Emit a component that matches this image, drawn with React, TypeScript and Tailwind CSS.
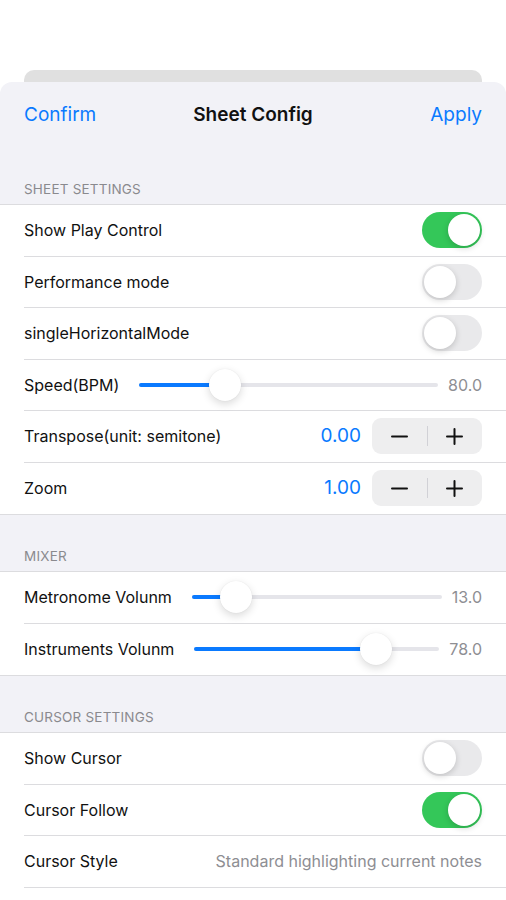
import React from 'react';

const font = { fontFamily: 'Inter, "Noto Sans", sans-serif' };

function Toggle({ on }: { on: boolean }) {
  return (
    <div
      className={`w-[60px] h-[36px] rounded-full p-[2px] flex ${
        on ? 'bg-[#34c759] justify-end' : 'bg-[#e9e9eb] justify-start'
      }`}
    >
      <div className="w-[32px] h-[32px] rounded-full bg-white shadow-[0_2px_6px_rgba(0,0,0,0.18)]" />
    </div>
  );
}

function Slider({ value, fraction }: { value: string; fraction: number }) {
  const left = `calc(${fraction} * (100% - 32px))`;
  const fill = `calc(${fraction} * (100% - 32px) + 16px)`;
  return (
    <>
      <div className="flex-1 relative h-[32px] flex items-center ml-5 mr-[10px]">
        <div className="w-full h-[4px] rounded-full bg-[#e5e5ea]" />
        <div className="absolute left-0 h-[4px] rounded-full bg-[#0a7aff]" style={{ width: fill }} />
        <div
          className="absolute top-0 w-[32px] h-[32px] rounded-full bg-white shadow-[0_3px_8px_rgba(0,0,0,0.15),0_0_1px_rgba(0,0,0,0.1)]"
          style={{ left }}
        />
      </div>
      <span className="text-[16px] text-[#8e8e93]">{value}</span>
    </>
  );
}

function Stepper({ value }: { value: string }) {
  return (
    <div className="flex items-center gap-[11px]">
      <span className="text-[19px] text-[#0a7aff]">{value}</span>
      <div className="w-[110px] h-[36px] rounded-[9px] bg-[#eeeeef] flex items-center">
        <div className="flex-1 flex justify-center">
          <svg width="17" height="17" viewBox="0 0 17 17">
            <path d="M1 8.5h15" stroke="#111" strokeWidth="2" strokeLinecap="round" />
          </svg>
        </div>
        <div className="w-px h-[20px] bg-[#d1d1d6]" />
        <div className="flex-1 flex justify-center">
          <svg width="17" height="17" viewBox="0 0 17 17">
            <path d="M1 8.5h15M8.5 1v15" stroke="#111" strokeWidth="2" strokeLinecap="round" />
          </svg>
        </div>
      </div>
    </div>
  );
}

function Row({ label, children, last }: { label: string; children?: React.ReactNode; last?: boolean }) {
  return (
    <div className="pl-6 bg-white">
      <div
        className={`h-[51.5px] pr-6 flex items-center ${last ? '' : 'border-b border-[#dcdcdf]'}`}
      >
        <span className="text-[16px] text-[#111] whitespace-nowrap">{label}</span>
        {children}
      </div>
    </div>
  );
}

function Header({ title }: { title: string }) {
  return (
    <div className="h-[57px] flex items-end px-6 pb-[5px] border-b border-[#dcdcdf]">
      <span className="text-[13.5px] uppercase text-[#8a8a8e] tracking-[0.2px]">{title}</span>
    </div>
  );
}

export default function App() {
  return (
    <div className="w-[506px] h-[900px] bg-white overflow-hidden flex flex-col" style={font}>
      <div className="h-[70px] shrink-0" />
      <div className="mx-6 h-[12px] shrink-0 rounded-t-[10px] bg-[#e0e0e0]" />
      <div className="flex-1 rounded-t-[12px] bg-[#f2f2f7] flex flex-col">
        <div className="h-[66px] shrink-0 px-6 grid grid-cols-3 items-center">
          <span className="text-[19px] text-[#0a7aff]">Confirm</span>
          <span className="text-[19px] font-semibold text-[#111] text-center whitespace-nowrap">Sheet Config</span>
          <span className="text-[19px] text-[#0a7aff] text-right">Apply</span>
        </div>

        <Header title="Sheet Settings" />
        <div className="border-b border-[#dcdcdf]">
          <Row label="Show Play Control">
            <div className="ml-auto"><Toggle on /></div>
          </Row>
          <Row label="Performance mode">
            <div className="ml-auto"><Toggle on={false} /></div>
          </Row>
          <Row label="singleHorizontalMode">
            <div className="ml-auto"><Toggle on={false} /></div>
          </Row>
          <Row label="Speed(BPM)">
            <Slider value="80.0" fraction={0.263} />
          </Row>
          <Row label="Transpose(unit: semitone)">
            <div className="ml-auto"><Stepper value="0.00" /></div>
          </Row>
          <Row label="Zoom" last>
            <div className="ml-auto"><Stepper value="1.00" /></div>
          </Row>
        </div>

        <Header title="Mixer" />
        <div className="border-b border-[#dcdcdf]">
          <Row label="Metronome Volunm">
            <Slider value="13.0" fraction={0.13} />
          </Row>
          <Row label="Instruments Volunm" last>
            <Slider value="78.0" fraction={0.78} />
          </Row>
        </div>

        <Header title="Cursor Settings" />
        <div className="flex-1 bg-white">
          <Row label="Show Cursor">
            <div className="ml-auto"><Toggle on={false} /></div>
          </Row>
          <Row label="Cursor Follow">
            <div className="ml-auto"><Toggle on /></div>
          </Row>
          <Row label="Cursor Style">
            <span className="ml-auto text-[16px] text-[#8e8e93] whitespace-nowrap">
              Standard highlighting current notes
            </span>
          </Row>
        </div>
      </div>
    </div>
  );
}
